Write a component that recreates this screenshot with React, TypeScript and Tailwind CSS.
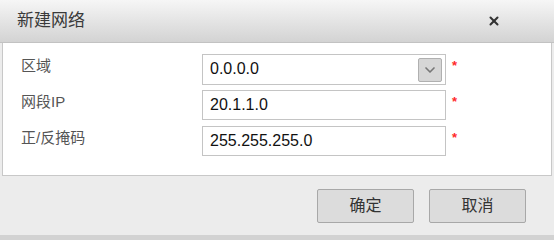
import { ChevronDown, X } from 'lucide-react';

const FONT = { fontFamily: '"Liberation Sans", Arial, "Noto Sans CJK SC", sans-serif' };

function Field({ label, value, select }: { label: string; value: string; select?: boolean }) {
  return (
    <div className="flex items-center h-[30px]">
      <div className="w-[199px] pl-[18px] text-[15px] text-[#555] -mt-[6px]">{label}</div>
      <div className={`relative flex items-center w-[244px] border border-[#c4c4c4] bg-white pl-[7px] text-[16px] text-[#111] ${select ? 'h-[31px]' : 'h-[30px]'}`}>
        {value}
        {select && (
          <div className="absolute right-[3px] top-[3px] flex h-[24px] w-[24px] items-center justify-center rounded-[2px] border border-[#b0b0b0] bg-[#d6d6d6]">
            <ChevronDown className="h-[16px] w-[16px] text-[#777]" strokeWidth={2.5} />
          </div>
        )}
      </div>
      <span className="ml-[6px] -mt-[6px] text-[13px] font-bold text-[#ff2a2a]">*</span>
    </div>
  );
}

export default function App() {
  return (
    <div className="w-[554px] h-[240px] bg-[#ececec] flex flex-col" style={FONT}>
      {/* 标题栏 */}
      <div className="h-[43px] flex items-center justify-between pl-[17px] pr-[53px] bg-gradient-to-b from-[#f6f6f6] to-[#d3d3d3] border-b border-[#c2c2c2]">
        <span className="text-[17px] text-[#3a3a3a]">新建网络</span>
        <X className="h-[14px] w-[14px] text-[#333]" strokeWidth={3.5} />
      </div>
      {/* 表单 */}
      <div className="mx-[2px] h-[133px] bg-white border border-t-0 border-[#c8c8c8] pt-[11px] flex flex-col gap-[6px]">
        <Field label="区域" value="0.0.0.0" select />
        <Field label="网段IP" value="20.1.1.0" />
        <Field label="正/反掩码" value="255.255.255.0" />
      </div>
      {/* 按钮 */}
      <div className="flex-1 flex justify-end gap-[15px] pr-[28px] pt-[13px]">
        <button type="button" className="h-[34px] w-[97px] rounded-[2px] border border-[#a8a8a8] bg-[#dcdcdc] text-[16px] text-[#333]">确定</button>
        <button type="button" className="h-[34px] w-[97px] rounded-[2px] border border-[#a8a8a8] bg-[#dcdcdc] text-[16px] text-[#333]">取消</button>
      </div>
      <div className="h-[5px] bg-[#d2d2d2]" />
    </div>
  );
}
